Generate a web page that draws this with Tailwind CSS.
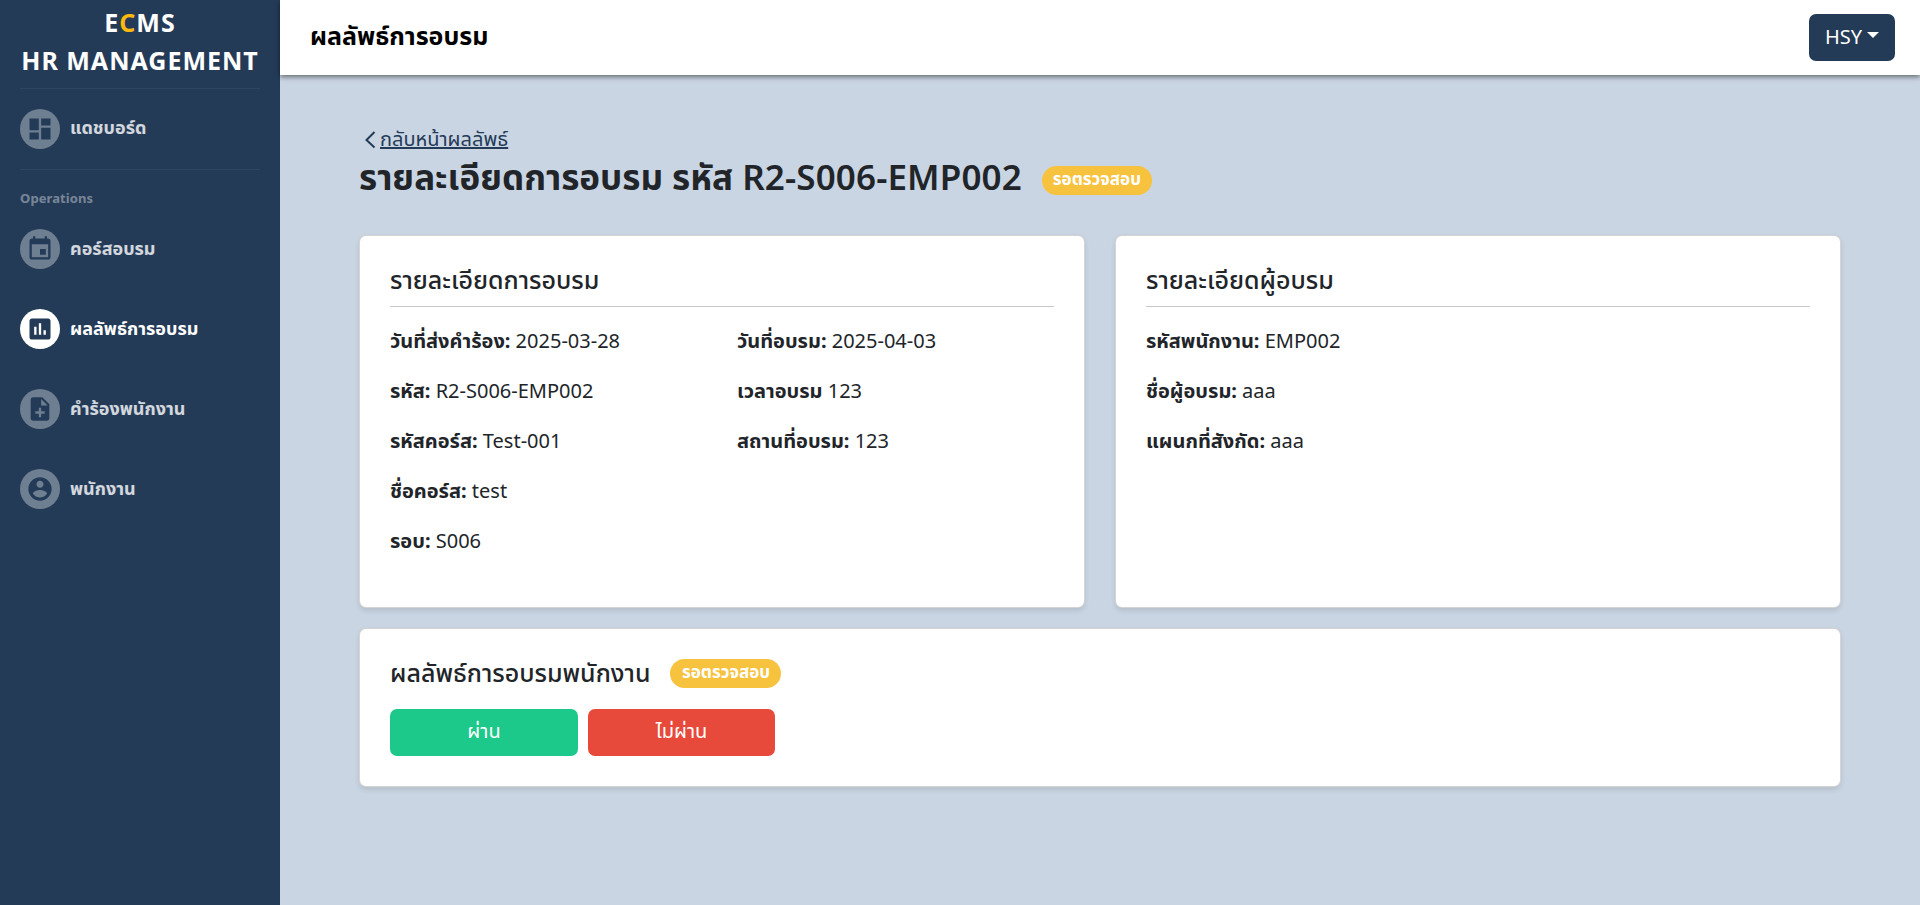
<!DOCTYPE html>
<html lang="th">
<head>
<meta charset="utf-8">
<title>ECMS HR Management</title>
<script src="https://cdn.jsdelivr.net/npm/@tailwindcss/browser@4"></script>
</head>
<body class="h-[905px] overflow-hidden bg-[#cad5e3] font-['Noto_Sans','Noto_Sans_Thai',sans-serif] text-[20px] leading-[30px] text-[#212529]">
<div class="flex h-full">
  <aside class="flex w-[280px] shrink-0 flex-col bg-[#243b58] px-5 font-bold text-white">
    <div class="-mx-5 pt-[3px] text-center text-[25px] leading-[38px] tracking-[1px]">E<span class="text-[#ffb80c]">C</span>MS<br>HR MANAGEMENT</div>
    <div class="mt-[9px] h-px bg-white/5"></div>
    <a class="mt-5 flex h-10 items-center gap-[10px] text-[18px] text-white/80">
      <span class="flex size-10 items-center justify-center rounded-full bg-[#6f7f92] pr-px pb-px text-[#243b58]"><svg class="size-7" viewBox="0 0 24 24" fill="currentColor"><path d="M3 13h8V3H3v10zm0 8h8v-6H3v6zm10 0h8V11h-8v10zm0-18v6h8V3h-8z"/></svg></span><span class="-mt-1">แดชบอร์ด</span></a>
    <div class="mt-5 h-px bg-white/5"></div>
    <div class="mt-[18px] text-[13px] leading-5 tracking-[0.1px] text-white/40">Operations</div>
    <a class="mt-[21px] flex h-10 items-center gap-[10px] text-[18px] text-white/80">
      <span class="flex size-10 items-center justify-center rounded-full bg-[#6f7f92] pr-px pb-px text-[#243b58]"><svg class="size-7" viewBox="0 0 24 24" fill="currentColor"><path d="M17 12h-5v5h5v-5zM16 1v2H8V1H6v2H5c-1.110 0-1.990.9-1.990 2L3 19c0 1.100.89 2 2 2h14c1.100 0 2-.9 2-2V5c0-1.100-.9-2-2-2h-1V1h-2zm3 18H5V8h14v11z"/></svg></span><span class="-mt-0.5">คอร์สอบรม</span></a>
    <a class="mt-10 flex h-10 items-center gap-[10px] text-[18px] text-white">
      <span class="flex size-10 items-center justify-center rounded-full bg-white pr-px pb-px text-[#243b58]"><svg class="size-7" viewBox="0 0 24 24" fill="currentColor"><path d="M19 3H5c-1.100 0-2 .9-2 2v14c0 1.100.9 2 2 2h14c1.100 0 2-.9 2-2V5c0-1.100-.9-2-2-2zM9 17H7v-7h2v7zm4 0h-2V7h2v10zm4 0h-2v-4h2v4z"/></svg></span><span class="-mt-0.5">ผลลัพธ์การอบรม</span></a>
    <a class="mt-10 flex h-10 items-center gap-[10px] text-[18px] text-white/80">
      <span class="flex size-10 items-center justify-center rounded-full bg-[#6f7f92] pr-px pb-px text-[#243b58]"><svg class="size-7" viewBox="0 0 24 24" fill="currentColor"><path d="M14 2H6c-1.100 0-1.990.9-1.990 2L4 20c0 1.100.89 2 1.990 2H18c1.100 0 2-.9 2-2V8l-6-6zm2 14h-3v3h-2v-3H8v-2h3v-3h2v3h3v2zm-3-7V3.500L18.500 9H13z"/></svg></span><span class="-mt-0.5">คำร้องพนักงาน</span></a>
    <a class="mt-10 flex h-10 items-center gap-[10px] text-[18px] text-white/80">
      <span class="flex size-10 items-center justify-center rounded-full bg-[#6f7f92] pr-px pb-px text-[#243b58]"><svg class="size-7" viewBox="0 0 24 24" fill="currentColor"><path d="M12 2C6.480 2 2 6.480 2 12s4.480 10 10 10 10-4.480 10-10S17.520 2 12 2zm0 3c1.660 0 3 1.340 3 3s-1.340 3-3 3-3-1.340-3-3 1.340-3 3-3zm0 14.200c-2.500 0-4.710-1.280-6-3.220.03-1.990 4-3.080 6-3.080 1.990 0 5.970 1.090 6 3.080-1.290 1.940-3.500 3.220-6 3.220z"/></svg></span><span class="-mt-0.5">พนักงาน</span></a>
  </aside>
  <div class="flex grow flex-col">
    <header class="flex h-[75px] items-center justify-between bg-white pr-[25px] pl-[30px] shadow-[0_2px_5px_rgba(0,0,0,0.5)]">
      <h1 class="-mt-1.5 text-[25px] font-bold text-black">ผลลัพธ์การอบรม</h1>
      <button class="flex h-[47px] w-[86px] items-center justify-center gap-[5px] rounded-[7px] bg-[#243b58] pb-0.5 text-white">HSY<span class="-mt-1 border-x-6 border-t-6 border-x-transparent border-t-white"></span></button>
    </header>
    <main class="px-[79px] pt-[49px]">
      <a class="flex h-[30px] items-center pl-px text-[#243b58]"><svg class="h-5 w-5" viewBox="0 0 20 20" fill="none" stroke="currentColor" stroke-width="2"><path d="M14.500 3L6.500 11l8 7.500"/></svg><span class="underline">กลับหน้าผลลัพธ์</span></a>
      <div class="flex h-[48px] items-center"><h2 class="-mt-0.5 text-[35px] font-bold">รายละเอียดการอบรม รหัส <span class="font-semibold tracking-[0.13px]">R2-S006-EMP002</span></h2><span class="mt-1 ml-5 flex h-[29px] w-[110px] items-center justify-center rounded-full bg-[#f7c23e] pb-0.5 text-[17px] font-bold text-white">รอตรวจสอบ</span></div>
      <div class="mt-[33px] grid grid-cols-2 gap-[30px]">
        <section class="h-[373px] rounded-[7px] border border-black/17 bg-white px-[30px] pt-[28px] shadow-[0_2.5px_5px_rgba(0,0,0,0.1)]">
          <h3 class="border-b border-[#c8c9ca] pb-[12px] text-[25px] font-medium">รายละเอียดการอบรม</h3>
          <div class="mt-[19px] grid grid-cols-[347px_1fr]">
            <div class="flex flex-col gap-5"><p><b>วันที่ส่งคำร้อง:</b> 2025-03-28</p><p><b>รหัส:</b> R2-S006-EMP002</p><p><b>รหัสคอร์ส:</b> Test-001</p><p><b>ชื่อคอร์ส:</b> test</p><p><b>รอบ:</b> S006</p></div>
            <div class="flex flex-col gap-5"><p><b>วันที่อบรม:</b> 2025-04-03</p><p><b>เวลาอบรม</b> 123</p><p><b>สถานที่อบรม:</b> 123</p></div>
          </div>
        </section>
        <section class="h-[373px] rounded-[7px] border border-black/17 bg-white px-[30px] pt-[28px] shadow-[0_2.5px_5px_rgba(0,0,0,0.1)]">
          <h3 class="border-b border-[#c8c9ca] pb-[12px] text-[25px] font-medium">รายละเอียดผู้อบรม</h3>
          <div class="mt-[19px] flex flex-col gap-5"><p><b>รหัสพนักงาน:</b> EMP002</p><p><b>ชื่อผู้อบรม:</b> aaa</p><p><b>แผนกที่สังกัด:</b> aaa</p></div>
        </section>
      </div>
      <section class="mt-[20px] h-[159px] rounded-[7px] border border-black/17 bg-white px-[30px] pt-[29px] shadow-[0_2.5px_5px_rgba(0,0,0,0.1)]">
        <div class="flex h-[30px] items-center"><h3 class="-mt-0.5 text-[25px] font-medium">ผลลัพธ์การอบรมพนักงาน</h3><span class="ml-5 flex h-[29px] w-[111px] items-center justify-center rounded-full bg-[#f7c23e] pb-0.5 text-[17px] font-bold text-white">รอตรวจสอบ</span></div>
        <div class="mt-[21px] flex gap-[10px] text-white"><button class="h-[47px] w-[188px] rounded-[7px] bg-[#1cc88a] pb-[3px]">ผ่าน</button><button class="h-[47px] w-[187px] rounded-[7px] bg-[#e74a3b] pb-[3px]">ไม่ผ่าน</button></div>
      </section>
    </main>
  </div>
</div>
</body>
</html>
